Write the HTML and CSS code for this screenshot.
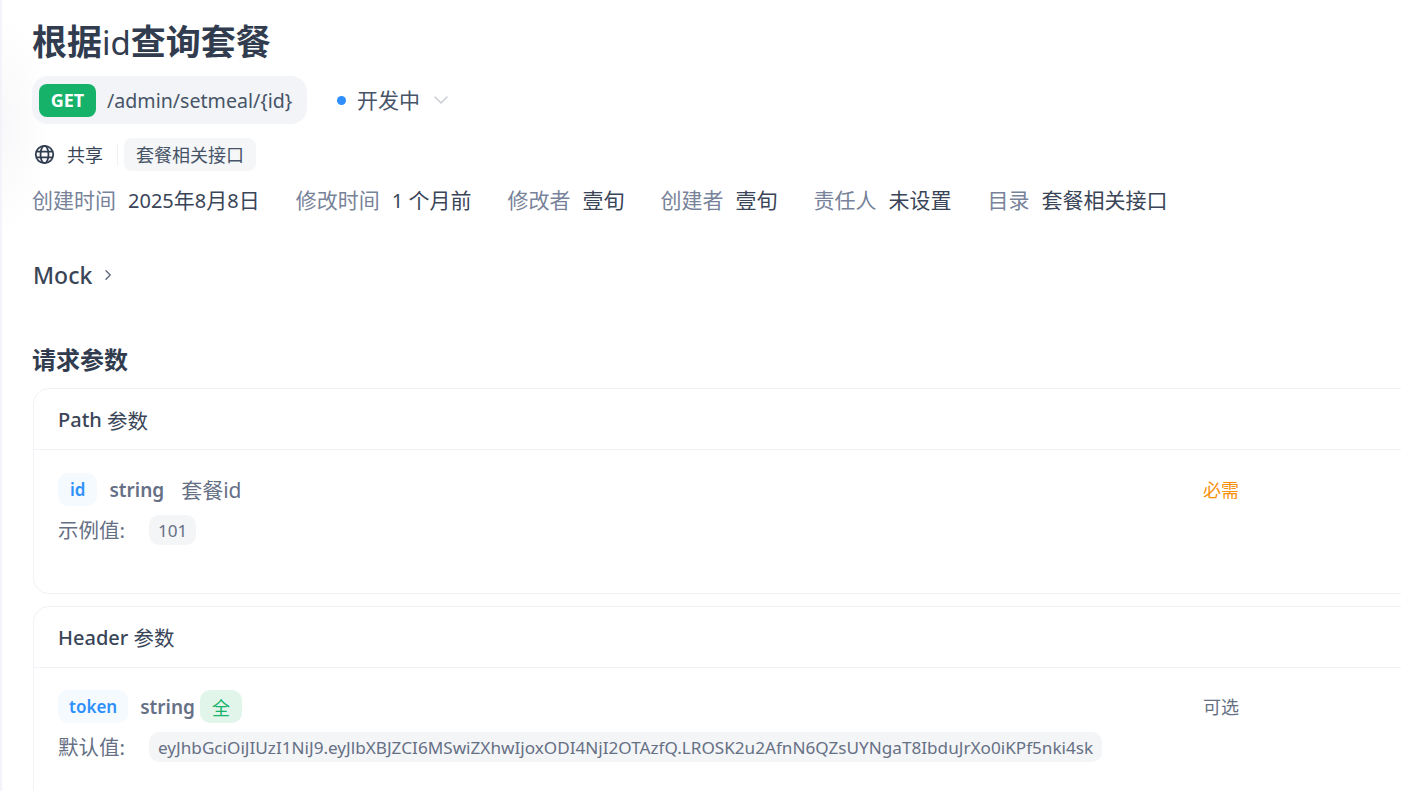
FILE: index.html
```html
<!DOCTYPE html>
<html lang="zh">
<head>
<meta charset="utf-8">
<title>根据id查询套餐</title>
<link rel="stylesheet" href="styles.css">
</head>
<body>
<main class="page">
  <h1 class="title"><span>根据</span><span class="title-latin">id</span><span>查询套餐</span></h1>
  <div class="endpoint-row">
    <div class="endpoint">
      <span class="method">GET</span>
      <span class="path">/admin/setmeal/{id}</span>
    </div>
    <div class="status">
      <span class="dot"></span>
      <span class="status-text">开发中</span>
      <svg class="chevron" width="16" height="16" viewBox="0 0 16 16" fill="none"><path d="M2 5 8 11l6-6" stroke="#c9ccd3" stroke-width="1.500" stroke-linecap="round" stroke-linejoin="round"/></svg>
    </div>
  </div>
  <div class="share-row">
    <svg class="globe" width="21" height="21" viewBox="0 0 20 20" fill="none" stroke="#2f3b4f" stroke-width="1.700"><circle cx="10" cy="10" r="8.300"/><ellipse cx="10" cy="10" rx="3.800" ry="8.300"/><path d="M2.300 7.200h15.400M2.300 12.800h15.400"/></svg>
    <span class="share-text">共享</span>
    <span class="divider"></span>
    <span class="tag">套餐相关接口</span>
  </div>
  <div class="meta">
    <span class="meta-item"><span class="meta-key">创建时间</span><span class="meta-val"><span class="num">2025</span>年<span class="num">8</span>月<span class="num">8</span>日</span></span>
    <span class="meta-item"><span class="meta-key">修改时间</span><span class="meta-val"><span class="num">1</span> 个月前</span></span>
    <span class="meta-item"><span class="meta-key">修改者</span><span class="meta-val">壹旬</span></span>
    <span class="meta-item"><span class="meta-key">创建者</span><span class="meta-val">壹旬</span></span>
    <span class="meta-item"><span class="meta-key">责任人</span><span class="meta-val">未设置</span></span>
    <span class="meta-item"><span class="meta-key">目录</span><span class="meta-val">套餐相关接口</span></span>
  </div>
  <div class="mock">
    <span>Mock</span>
    <svg width="12" height="12" viewBox="0 0 12 12" fill="none"><path d="M4 1.800 8.200 6 4 10.200" stroke="#5b6678" stroke-width="1.300" stroke-linecap="round" stroke-linejoin="round"/></svg>
  </div>
  <h2 class="section">请求参数</h2>
  <section class="card card-path">
    <div class="card-head"><span class="head-latin">Path</span>&nbsp;<span class="head-cjk">参数</span></div>
    <div class="card-body">
      <div class="param">
        <span class="name">id</span>
        <span class="type">string</span>
        <span class="desc">套餐id</span>
        <span class="req req-on">必需</span>
      </div>
      <div class="example">
        <span class="ex-label">示例值:</span>
        <span class="ex-val">101</span>
      </div>
    </div>
  </section>
  <section class="card card-header">
    <div class="card-head"><span class="head-latin">Header</span>&nbsp;<span class="head-cjk">参数</span></div>
    <div class="card-body">
      <div class="param">
        <span class="name">token</span>
        <span class="type type-tight">string</span>
        <span class="scope">全</span>
        <span class="req">可选</span>
      </div>
      <div class="example">
        <span class="ex-label">默认值:</span>
        <span class="ex-val">eyJhbGciOiJIUzI1NiJ9.eyJlbXBJZCI6MSwiZXhwIjoxODI4NjI2OTAzfQ.LROSK2u2AfnN6QZsUYNgaT8IbduJrXo0iKPf5nki4sk</span>
      </div>
    </div>
  </section>
</main>
</body>
</html>
```
FILE: styles.css
```css
* { box-sizing: border-box; }
html, body { margin: 0; height: 100%; overflow: hidden; background: #fff; }
body {
  font-family: "Noto Sans", "Noto Sans CJK SC", sans-serif;
  color: #323c4f;
  border-left: 2px solid #f3f4fa;
  background: radial-gradient(ellipse 50px 110px at 0 125px, #f8f8fa, #fff);
}
.page { padding: 18px 0 0 30px; width: 1399px; height: 791px; overflow: hidden; }
.title { margin: 0; font-size: 35px; line-height: 48px; font-weight: 700; color: #323c4f; height: 48px; }
.title-latin { font-weight: 400; font-size: 33px; }
.endpoint-row { display: flex; align-items: center; margin-top: 10px; height: 48px; }
.endpoint { display: flex; align-items: center; height: 48px; width: 275px; padding-left: 7px; background: #f2f4f8; border-radius: 16px; }
.method { display: flex; align-items: center; justify-content: center; width: 57px; height: 33px; border-radius: 8px; background: #17b26a; color: #fff; font-size: 18px; font-weight: 700; }
.path { margin-left: 11px; font-size: 19.600px; color: #475467; white-space: nowrap; }
.status { display: flex; align-items: center; margin-left: 30px; height: 48px; }
.dot { width: 9px; height: 9px; border-radius: 50%; background: #2f8fff; }
.status-text { margin-left: 11px; padding-bottom: 2px; font-size: 21px; color: #475467; }
.chevron { margin-left: 13px; margin-bottom: 1px; }
.share-row { display: flex; align-items: center; margin-top: 14px; height: 33px; }
.globe { margin-left: 2px; }
.share-text { margin-left: 12px; padding-bottom: 2px; font-size: 18px; color: #3a4558; }
.divider { width: 1px; height: 22px; margin: 0 6px 0 14px; background: #f0f1f4; }
.tag { display: flex; align-items: center; height: 33px; padding: 0 12px 2px; border-radius: 8px; background: #f5f6f8; font-size: 18px; color: #475467; }
.meta { display: flex; gap: 36px; margin-top: 12px; height: 32px; align-items: center; font-size: 21px; white-space: nowrap; }
.meta-item { display: flex; gap: 12px; }
.meta-key { color: #78839a; }
.meta-val { color: #3a4558; }
.num { font-size: 20px; }
.mock { display: flex; align-items: center; gap: 10px; margin: 44px 0 0 1px; height: 32px; font-size: 23px; font-weight: 500; color: #3a4558; }
.section { margin: 53px 0 0; font-size: 24px; line-height: 32px; font-weight: 700; color: #323c4f; }
.card { margin: 12px 0 0 1px; width: 1400px; border: 1px solid #f1f2f6; border-radius: 16px 0 0 16px; }
.card-path { height: 206px; }
.card-path .card-head { padding-top: 1px; }
.card-path .name { padding: 0 12px 1px; }
.card-header { margin-top: 12px; height: 260px; }
.card-head { display: flex; align-items: center; height: 61px; padding-left: 24px; font-size: 20px; color: #3a4558; border-bottom: 1px solid #f1f2f6; }
.head-latin { font-weight: 500; }
.head-cjk { font-size: 20.500px; font-weight: 400; }
.card-body { padding: 23px 0 0 24px; }
.card-header .card-body { padding-top: 22px; }
.param { position: relative; display: flex; align-items: center; height: 33px; }
.name { display: flex; align-items: center; height: 33px; padding: 0 11px 1px; border-radius: 10px; background: #f5faff; color: #2e90fa; font-size: 17px; font-weight: 600; }
.type { margin-left: 12px; font-size: 19px; font-weight: 600; color: #667085; }
.type-tight { margin-right: 5px; }
.desc { margin-left: 17px; padding-bottom: 2px; font-size: 21px; color: #667085; }
.scope { display: flex; align-items: center; justify-content: center; width: 42px; height: 33px; border-radius: 10px; background: #e2f5eb; color: #17b26a; font-size: 18px; }
.req { position: absolute; left: 1145px; top: 3px; font-size: 18px; color: #667085; }
.req-on { color: #f79009; }
.example { display: flex; align-items: center; margin-top: 9px; height: 30px; }
.ex-label { width: 91px; padding-bottom: 2px; font-size: 20.500px; color: #667085; }
.ex-val { display: flex; align-items: center; height: 30px; padding: 0 9px; border-radius: 10px; background: #f4f5f7; font-size: 17.150px; color: #667085; white-space: nowrap; }
```
